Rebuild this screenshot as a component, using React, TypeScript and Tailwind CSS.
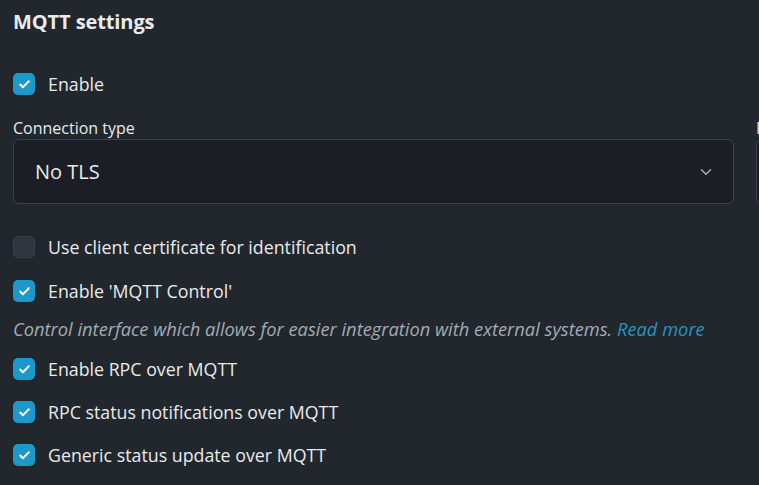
import { ChevronDown, Check } from 'lucide-react';

type Opt = { label: string; checked: boolean };

function Checkbox({ label, checked }: Opt) {
  return (
    <label className="flex items-center gap-[13px] h-[22px] cursor-pointer">
      <span
        className={`w-[22px] h-[22px] rounded-[5px] flex items-center justify-center shrink-0 ${
          checked ? 'bg-[#1c98c9]' : 'bg-[#2f353d] border border-[#3a4149]'
        }`}
      >
        {checked && <Check className="w-[13px] h-[13px] text-white" strokeWidth={3.5} />}
      </span>
      <span className="text-[17.8px] text-[#e8eaec] whitespace-nowrap">{label}</span>
    </label>
  );
}

export default function App() {
  const rpc: Opt[] = [
    { label: 'Enable RPC over MQTT', checked: true },
    { label: 'RPC status notifications over MQTT', checked: true },
    { label: 'Generic status update over MQTT', checked: true },
  ];

  return (
    <div
      className="w-[759px] h-[485px] overflow-hidden bg-[#22272e] text-[#e8eaec] pl-[13px]"
      style={{ fontFamily: '"Open Sans", "Noto Sans", sans-serif' }}
    >
      <h2 className="pt-[9px] text-[20px] font-bold leading-[26px] tracking-[-0.1px]">MQTT settings</h2>

      <div className="mt-[38px]">
        <Checkbox label="Enable" checked />
      </div>

      {/* connection settings, second column runs off the right edge */}
      <div className="mt-[23px] grid grid-cols-[721px_721px] gap-x-[22px]">
        <div>
          <div className="text-[16px] leading-[20px] text-[#e8eaec] whitespace-nowrap">Connection type</div>
          <div className="mt-[1px] h-[65px] rounded-[6px] border border-[#3b424b] bg-[#1b1f25] flex items-center justify-between pl-[21px] pr-[18px]">
            <span className="text-[20px]">No TLS</span>
            <ChevronDown className="w-[18px] h-[18px] text-[#a9b0b8]" strokeWidth={2} />
          </div>
        </div>
        <div>
          <div className="text-[16px] leading-[20px] text-[#e8eaec] whitespace-nowrap">Port</div>
          <div className="mt-[1px] h-[65px] rounded-[6px] border border-[#3b424b] bg-[#1b1f25]" />
        </div>
      </div>

      <div className="mt-[32px] flex flex-col gap-[22px]">
        <Checkbox label="Use client certificate for identification" checked={false} />
        <Checkbox label="Enable 'MQTT Control'" checked />
      </div>

      <p className="mt-[15px] text-[18.3px] italic text-[#a3abb3] leading-[24px] whitespace-nowrap">
        Control interface which allows for easier integration with external systems.{' '}
        <a className="text-[#2196c4]">Read more</a>
      </p>

      <div className="mt-[17px] flex flex-col gap-[21px]">
        {rpc.map((o) => (
          <Checkbox key={o.label} {...o} />
        ))}
      </div>
    </div>
  );
}
